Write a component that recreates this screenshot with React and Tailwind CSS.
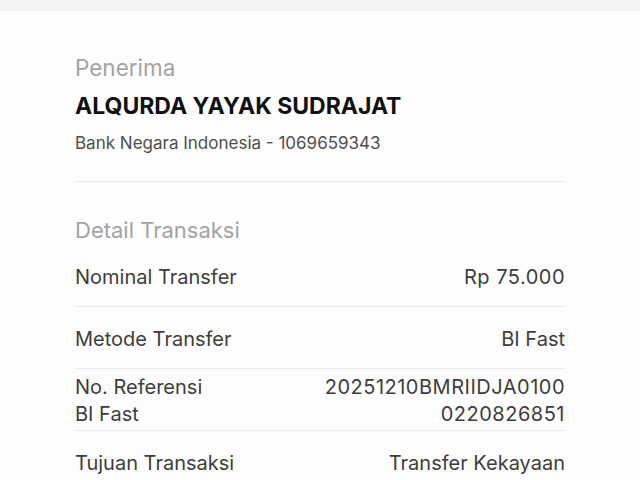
import { Fragment } from 'react';

// wide = digit-heavy values, set with a little extra tracking
const rows = [
  { label: ['Nominal Transfer'], value: ['Rp 75.000'], wide: true },
  { label: ['Metode Transfer'], value: ['BI Fast'] },
  { label: ['No. Referensi', 'BI Fast'], value: ['20251210BMRIIDJA0100', '0220826851'], wide: true },
  { label: ['Tujuan Transaksi'], value: ['Transfer Kekayaan'] },
];

export default function App() {
  return (
    <div className="min-h-screen w-[640px] h-[480px] overflow-hidden bg-[#fdfdfd] font-['Inter',sans-serif]">
      <div className="h-[11px] bg-[#f3f3f3]" />
      <div className="px-[75px] pt-[42px]">
        {/* Penerima */}
        <p className="text-[22.5px] leading-[30px] text-[#a3a3a3]">Penerima</p>
        <p className="mt-[8px] text-[23px] leading-[30px] font-bold text-[#111]">
          ALQURDA YAYAK SUDRAJAT
        </p>
        <p className="mt-[10px] text-[17px] leading-[24px] text-[#4f4f4f]">
          Bank Negara Indonesia - 1069659343
        </p>
        <div className="mt-[26px] h-px bg-[#ececec]" />

        {/* Detail Transaksi */}
        <p className="mt-[33px] text-[22px] leading-[30px] text-[#a3a3a3]">Detail Transaksi</p>
        <div className="mt-[18px]">
          {rows.map((r, i) => {
            const multi = r.label.length > 1;
            const pad = i === 0 ? 'pb-[15px]' : multi ? 'pt-[5px] pb-[2px]' : 'pt-[18px] pb-[15px]';
            return (
              <Fragment key={i}>
                {i > 0 && <div className="h-px bg-[#ececec]" />}
                <div className={`flex justify-between text-[20px] text-[#3d3d3d] ${multi ? 'leading-[27px]' : 'leading-[28px]'} ${pad}`}>
                  <div>
                    {r.label.map((t) => (
                      <div key={t}>{t}</div>
                    ))}
                  </div>
                  <div className={`text-right ${r.wide ? 'tracking-[0.5px]' : ''}`}>
                    {r.value.map((t) => (
                      <div key={t}>{t}</div>
                    ))}
                  </div>
                </div>
              </Fragment>
            );
          })}
        </div>
      </div>
    </div>
  );
}
